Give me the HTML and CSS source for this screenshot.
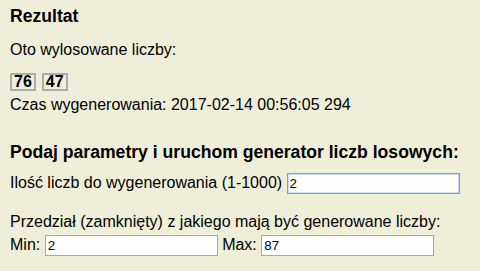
FILE: index.html
```html
<!DOCTYPE html>
<html lang="pl">
<head>
<meta charset="utf-8">
<title>Generator liczb losowych</title>
<link rel="stylesheet" href="styles.css">
</head>
<body>
<div class="page">
  <h3 class="title">Rezultat</h3>
  <p class="line intro">Oto wylosowane liczby:</p>
  <div class="numbers">
    <span class="num">76</span>
    <span class="num">47</span>
  </div>
  <p class="line time">Czas wygenerowania: 2017-02-14 00:56:05 294</p>
  <h3 class="title form-title">Podaj parametry i uruchom generator liczb losowych:</h3>
  <div class="field count">
    <label for="ile">Ilość liczb do wygenerowania (1-1000)</label>
    <input id="ile" class="inp focused" type="text" value="2" autofocus>
  </div>
  <p class="line range-label">Przedział (zamknięty) z jakiego mają być generowane liczby:</p>
  <div class="field range">
    <label for="min">Min:</label>
    <input id="min" class="inp" type="text" value="2">
    <label for="max">Max:</label>
    <input id="max" class="inp" type="text" value="87">
  </div>
</div>
</body>
</html>
```
FILE: styles.css
```css
html, body {
  margin: 0;
  padding: 0;
  background: #efefd9;
}
body {
  font-family: "Liberation Sans", Arial, sans-serif;
  font-size: 16px;
  color: #000;
}
.page {
  padding: 6px 10px 0 10px;
}
.title {
  margin: 0;
  font-size: 17.6px;
  font-weight: bold;
}
.line {
  margin: 0;
}
.intro {
  margin-top: 14px;
}
.numbers {
  display: flex;
  gap: 6px;
  margin-top: 14px;
}
.num {
  display: inline-block;
  border: 2px solid #acacac;
  padding: 0 2px;
  font-weight: bold;
  font-size: 16px;
  line-height: 13.5px;
  height: 13.5px;
}
.time {
  margin-top: 5px;
}
.form-title {
  margin-top: 28px;
}
.field label {
  font-size: 16px;
}
.count {
  margin-top: 10px;
}
.range-label {
  margin-top: 19px;
}
.range {
  margin-top: 4px;
}
.inp {
  box-sizing: border-box;
  width: 173px;
  height: 21px;
  border: 1px solid #a9a9a9;
  padding: 1px 2px;
  background: #fff;
  font-family: "Liberation Sans", Arial, sans-serif;
  font-size: 13.33px;
  color: #000;
  margin: 0;
  vertical-align: baseline;
  outline: none;
}
.focused {
  border: 1px solid #7aa1d8;
  box-shadow: inset 0 0 0 1px #c9daf3;
}
```
